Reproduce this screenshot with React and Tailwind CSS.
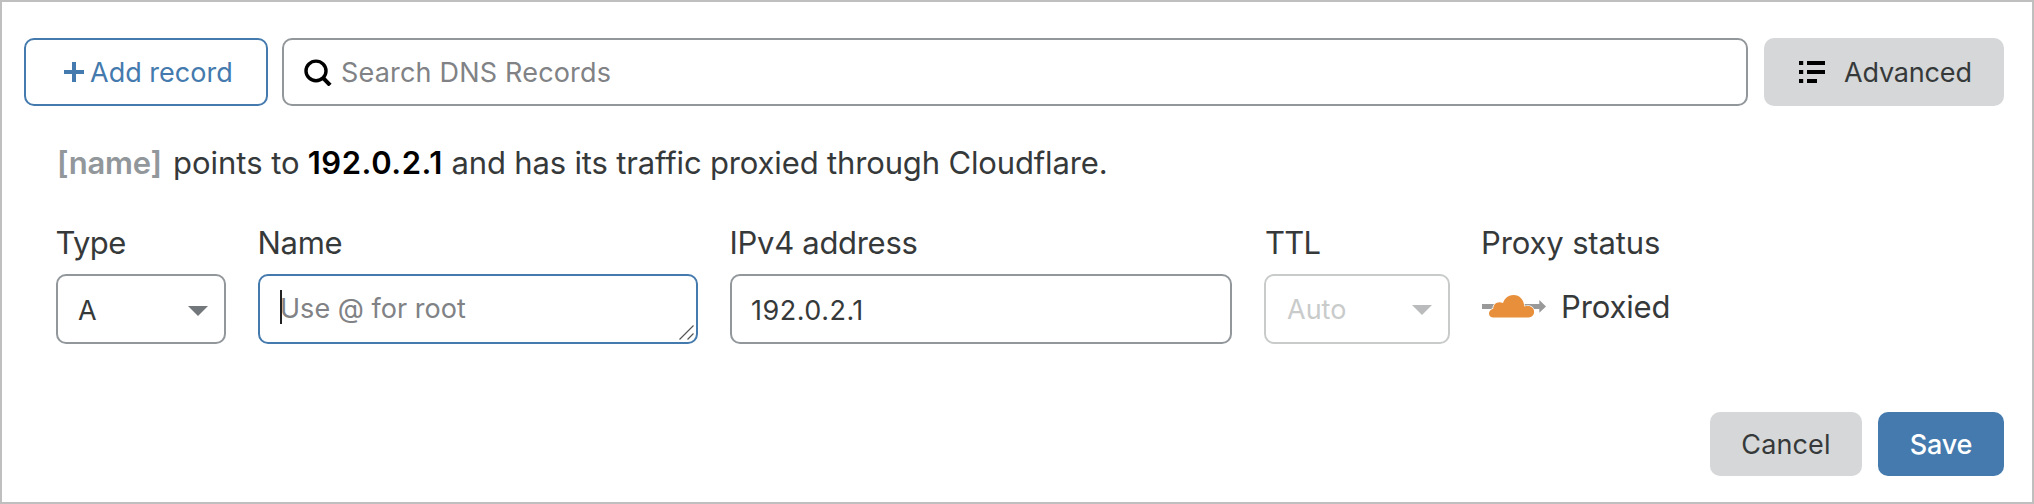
function Caret({ className }) {
  return (
    <svg className={className} width="20" height="10" viewBox="0 0 20 10" aria-hidden="true">
      <path d="M0 0H20L10 10Z" fill="currentColor" />
    </svg>
  );
}

function SearchIcon() {
  return (
    <svg width="28" height="28" viewBox="0 0 28 28" fill="none" stroke="#000" aria-hidden="true">
      <ellipse cx="12" cy="12.9" rx="10" ry="9.8" strokeWidth="3.4" />
      <path d="M18.8 19.6L26.1 27.2" strokeWidth="4" />
    </svg>
  );
}

function ListIcon() {
  return (
    <svg width="26" height="22" viewBox="0 0 26 22" fill="#000" aria-hidden="true">
      <path d="M0 0H4.2V4H0ZM8 0H26V4H8ZM0 9H4.2V13H0ZM8 9H26V13H8ZM0 18H4.2V22H0ZM8 18H18V22H8Z" />
    </svg>
  );
}

function ProxiedIcon() {
  return (
    <svg width="64" height="24" viewBox="0 0 64 24" aria-hidden="true">
      <path d="M0 9H57.3V5L64 11.4L57.3 17.8V14H0Z" fill="#999" />
      <path
        d="M11.4 22.4H46.4C49.8 22.3 52.1 19.9 52.1 16.9C52.1 13.5 49.4 11.1 46.2 11.1C45 11.1 43.9 11.1 42.4 11.5C41.8 4.7 37.6 0 31.6 0C26.7 0 22.8 3 21 7.9C19.9 7.4 18.6 7.2 17.4 7.2C13.8 7.3 11.3 9.9 11.2 13.7C8.6 14.5 7 16.2 7 18.4C7 20.9 9 22.4 11.4 22.4Z"
        fill="#e88f3b"
        stroke="#fff"
        strokeWidth="1.6"
        paintOrder="stroke"
      />
    </svg>
  );
}

function Field({ label, labelClass, width, children }) {
  return (
    <div className={`flex shrink-0 flex-col ${width}`}>
      <label className={`h-10 text-[31px] leading-10 whitespace-nowrap ${labelClass}`}>{label}</label>
      <div className="mt-[11px]">{children}</div>
    </div>
  );
}

export default function App() {
  return (
    <div className="flex h-[504px] w-[2034px] flex-col border-2 border-[#bfbfbf] bg-white pt-9 pr-7 pl-[22px] font-[Inter,sans-serif] text-[27px] leading-10 text-[#36393a]">
      <div className="flex h-[68px]">
        <button className="flex w-[244px] items-center rounded-[10px] border-2 border-[#447aad] pl-[38px] text-[#447aad]">
          <svg width="20" height="20" viewBox="0 0 20 20" aria-hidden="true">
            <path d="M8 0H12V8H20V12H12V20H8V12H0V8H8Z" fill="currentColor" />
          </svg>
          <span className="ml-1.5 pt-px tracking-[0.02px] whitespace-nowrap">Add record</span>
        </button>
        <div className="ml-3.5 flex w-[1466px] items-center rounded-[10px] border-2 border-[#92979b] pl-5">
          <SearchIcon />
          <span className="ml-[9px] pt-px tracking-[0.19px] text-[#808285]">Search DNS Records</span>
        </div>
        <button className="ml-4 flex w-60 items-center rounded-[10px] bg-[#d5d7d8] pl-[35px]">
          <ListIcon />
          <span className="ml-[19px] pt-px tracking-[-0.17px]">Advanced</span>
        </button>
      </div>

      <p className="mt-[37px] flex h-10 pl-[33px] text-[31px] whitespace-nowrap">
        <span className="font-semibold tracking-[-0.2px] text-[#92979b]">[name]</span>
        <span className="ml-[11px]">points to</span>
        <span className="ml-2 font-semibold tracking-[0.55px] text-black">192.0.2.1</span>
        <span className="ml-[8.5px] tracking-[-0.15px]">and has its traffic proxied through Cloudflare.</span>
      </p>

      <div className="mt-10 flex gap-8 pl-8">
        <Field label="Type" labelClass="-ml-[0.5px] tracking-[-0.6px]" width="w-[170px]">
          <div className="flex h-[70px] items-center justify-between rounded-[10px] border-2 border-[#92979b] pt-1 pr-4 pl-5">
            <span>A</span>
            <Caret className="text-[#72777b]" />
          </div>
        </Field>
        <Field label="Name" labelClass="-ml-[0.5px] tracking-[-0.31px]" width="w-[440px]">
          <div className="relative flex h-[70px] items-center rounded-[10px] border-2 border-[#447aad] pb-px pl-5">
            <span className="tracking-[0.03px] text-[#808285]">Use @ for root</span>
            <span className="absolute top-3.5 left-5 h-[34px] w-0.5 bg-[#222]" />
            <svg className="absolute right-0.5 bottom-0.5" width="15" height="15" viewBox="0 0 15 15" fill="none" stroke="#555" aria-hidden="true">
              <path d="M0.5 14.5L14.5 0.5M8.5 14.5L14.5 8.5" strokeWidth="1.2" />
            </svg>
          </div>
        </Field>
        <Field label="IPv4 address" labelClass="-ml-[0.5px] tracking-[-0.3px]" width="w-[502px]">
          <div className="flex h-[70px] items-center rounded-[10px] border-2 border-[#92979b] pt-[3px] pl-[19px]">
            <span className="tracking-[0.5px]">192.0.2.1</span>
          </div>
        </Field>
        <Field label="TTL" labelClass="pl-px tracking-[-0.76px]" width="w-[186px]">
          <div className="flex h-[70px] items-center justify-between rounded-[10px] border-2 border-[#c9cbcb] pt-px pr-4 pl-[21px] text-[#c9cbcb]">
            <span>Auto</span>
            <Caret className="text-[#b9bbbc]" />
          </div>
        </Field>
        <Field label="Proxy status" labelClass="-ml-px tracking-[-0.13px]" width="w-[200px]">
          <div className="flex h-[66px] items-center">
            <ProxiedIcon />
            <span className="ml-[15px] text-[31px] tracking-[-0.15px]">Proxied</span>
          </div>
        </Field>
      </div>

      <div className="mt-[68px] flex h-16 justify-end gap-4">
        <button className="w-[152px] rounded-[10px] bg-[#d5d7d8] pt-px tracking-[0.14px]">Cancel</button>
        <button className="w-[126px] rounded-[10px] bg-[#447aad] pt-px font-medium tracking-[-0.12px] text-white">Save</button>
      </div>
    </div>
  );
}
